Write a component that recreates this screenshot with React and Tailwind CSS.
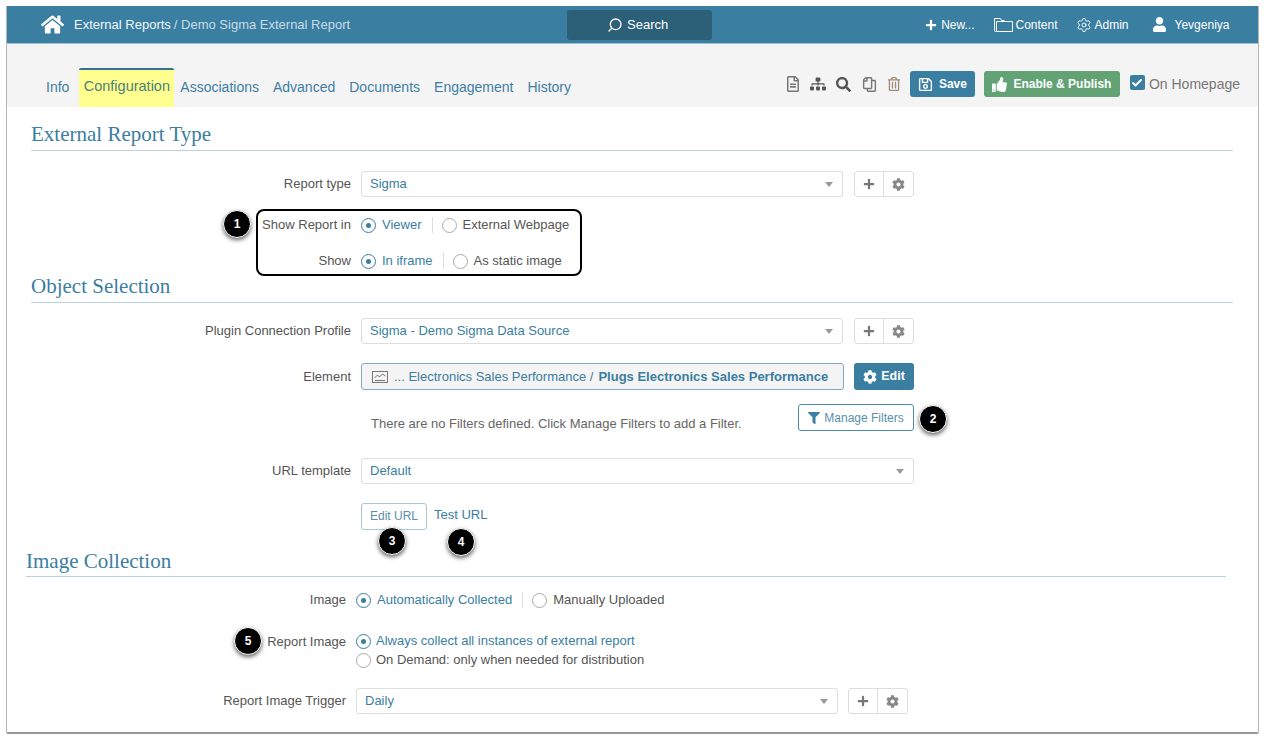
import React from 'react';
import { Search, Settings, Check } from 'lucide-react';
import { FaHome, FaPlus, FaCog, FaFilter, FaUser, FaSitemap, FaSearch, FaThumbsUp, FaRegSave, FaRegFileAlt, FaRegCopy, FaRegTrashAlt } from 'react-icons/fa';

const Radio = ({ on, label, gap = 'gap-[6px]' }) => (
    <span className={`flex items-center ${gap} ${on ? 'text-[#3a7ea1]' : 'text-[#555]'}`}>
        <span className={`w-[15px] h-[15px] rounded-full border flex items-center justify-center bg-white ${on ? 'border-[#3a7ea1] border-[1.5px]' : 'border-[#aaa]'}`}>
            {on && <span className="w-[5px] h-[5px] rounded-full bg-[#3a7ea1]" />}
        </span>
        {label}
    </span>
);

const RadioPair = ({ a, b }) => (
    <div className="flex items-center">
        <Radio on label={a} />
        <span className="w-px h-[16px] bg-[#ddd] ml-[10px] mr-[9px]" />
        <Radio label={b} />
    </div>
);

const Label = ({ children, w = 'w-[354px]' }) => (
    <div className={`${w} shrink-0 text-right pr-[10px] text-[#555]`}>{children}</div>
);

const Select = ({ value, w }) => (
    <div className={`${w} h-[26px] border border-[#ddd] rounded-[3px] bg-white flex items-center justify-between pl-[8px] pr-[9px] text-[#3a7ea1]`}>
        {value}
        <span className="w-0 h-0 border-l-[4px] border-r-[4px] border-t-[5px] border-l-transparent border-r-transparent border-t-[#999]" />
    </div>
);

const AddGear = ({ className = 'ml-[11px]' }) => (
    <div className={`${className} h-[26px] w-[60px] border border-[#ddd] rounded-[3px] flex bg-white`}>
        <div className="w-[29px] flex items-center justify-center border-r border-[#ddd]">
            <FaPlus size={12} className="text-[#777]" />
        </div>
        <div className="flex-1 flex items-center justify-center">
            <FaCog size={13} className="text-[#888]" />
        </div>
    </div>
);

const Title = ({ children, className }) => (
    <div className={`border-b border-[#b9d2de] font-['Liberation_Serif',serif] text-[21px] leading-[24px] text-[#3a7ea1] ${className}`}>{children}</div>
);

// numbered callouts sit on top of the form
const Badge = ({ n, className }) => (
    <div className={`absolute w-[28px] h-[28px] rounded-full bg-black text-white text-[12px] font-bold flex items-center justify-center border border-white shadow-[0_2px_4px_rgba(0,0,0,0.6)] ${className}`}>{n}</div>
);

const FolderIcon = () => (
    <svg width="19" height="16" viewBox="0 0 19 16" fill="none" stroke="#fff" strokeWidth="1" className="ml-[20px]">
        <path d="M2.5 14.5h-1a1 1 0 0 1-1-1V1.5h6l1 2h3" />
        <path d="M2.5 14.5V4.5h16v10z" />
    </svg>
);

const ChartIcon = () => (
    <svg width="16" height="12" viewBox="0 0 16 12" fill="none" stroke="#777" strokeWidth="1">
        <rect x="0.5" y="0.5" width="15" height="11" />
        <path d="M2.5 7l3-3 2 2 3-3 3 2M3 9.5h10" />
    </svg>
);

const tabs = ['Associations', 'Advanced', 'Documents', 'Engagement', 'History'];

const App = () => {
    return (
        <div className="relative w-[1264px] h-[736px] bg-white pl-[6px] pr-[5px] pt-[6px] font-['Liberation_Sans',sans-serif] overflow-hidden">
            <div className="relative h-[728px] border border-t-0 border-[#b5b5b5] border-b-[2px] border-b-[#999] rounded-b-[2px] overflow-hidden">
                {/* top bar */}
                <div className="h-[38px] bg-[#3a7ea1] border-b border-[#9fc4d6] flex items-center text-white text-[13px]">
                    <FaHome size={23} className="ml-[34px]" />
                    <span className="ml-[10px] text-[#f0f6f9]">External Reports</span>
                    <span className="ml-[3px] text-[#c9dde7]">/ Demo Sigma External Report</span>
                    <div className="ml-[217px] w-[145px] h-[30px] bg-[#2c6079] rounded-[3px] flex items-center justify-center gap-[4px] pr-[4px] text-[13px]">
                        <Search size={16} strokeWidth={2} className="-scale-x-100" />
                        Search
                    </div>
                    <div className="ml-[213px] flex items-center text-[12px]">
                        <FaPlus size={12} />
                        <span className="ml-[4px]">New...</span>
                        <FolderIcon />
                        <span className="ml-[2px]">Content</span>
                        <Settings size={16} strokeWidth={1.4} className="ml-[18px]" />
                        <span className="ml-[3px]">Admin</span>
                        <FaUser size={15} className="ml-[23px]" />
                        <span className="ml-[8px]">Yevgeniya</span>
                    </div>
                </div>

                {/* tabs and actions */}
                <div className="h-[63px] bg-[#f4f4f4] flex items-end text-[14px] text-[#3f7ea3]">
                    <div className="flex items-end ml-[39px] h-[39px]">
                        <span className="h-[38px] leading-[36px]">Info</span>
                        <div className="ml-[10px] h-[39px] w-[95px] bg-[#ffff8f] border-t-[2px] border-[#2f7391] rounded-t-[2px] text-center text-[14.5px] leading-[32px] text-[#4d8177]">Configuration</div>
                        <div className="ml-[6px] flex gap-[14px]">
                            {tabs.map((tab) => (
                                <span key={tab} className="h-[38px] leading-[36px]">{tab}</span>
                            ))}
                        </div>
                    </div>
                    <div className="ml-auto mb-[10px] h-[26px] flex items-center">
                        <FaRegFileAlt size={16} className="text-[#777]" />
                        <FaSitemap size={16} className="ml-[9px] text-[#555]" />
                        <FaSearch size={15} className="ml-[10px] text-[#555]" />
                        <FaRegCopy size={15} className="ml-[11px] text-[#777] -scale-x-100" />
                        <FaRegTrashAlt size={14} className="ml-[10px] text-[#a08a7a]" />
                        <div className="ml-[9px] h-[26px] w-[65px] bg-[#3a7ea1] rounded-[3px] text-white text-[12px] font-bold flex items-center justify-center gap-[6px]">
                            <FaRegSave size={15} />
                            Save
                        </div>
                        <div className="ml-[9px] h-[26px] w-[136px] bg-[#62a274] rounded-[3px] text-white text-[12px] font-bold flex items-center justify-center gap-[6px]">
                            <FaThumbsUp size={15} />
                            Enable &amp; Publish
                        </div>
                        <div className="ml-[10px] w-[15px] h-[15px] rounded-[2px] bg-[#3a7ea1] flex items-center justify-center mb-[3px]">
                            <Check size={12} strokeWidth={4} className="text-white" />
                        </div>
                        <span className="ml-[4px] mr-[18px] text-[14px] text-[#777]">On Homepage</span>
                    </div>
                </div>

                {/* form */}
                <div className="text-[13px]">
                    <div className="pl-[24px] pr-[25px]">
                        <Title className="mt-[15px] h-[29px]">External Report Type</Title>
                    </div>
                    <div className="flex items-center mt-[20px]">
                        <Label>Report type</Label>
                        <Select value="Sigma" w="w-[482px]" />
                        <AddGear />
                    </div>
                    <div className="flex items-center mt-[18px] h-[20px]">
                        <Label>Show Report in</Label>
                        <RadioPair a="Viewer" b="External Webpage" />
                    </div>
                    <div className="flex items-center mt-[16px] h-[20px]">
                        <Label>Show</Label>
                        <RadioPair a="In iframe" b="As static image" />
                    </div>
                    <div className="pl-[24px] pr-[25px]">
                        <Title className="mt-[3px] h-[29px]">Object Selection</Title>
                    </div>
                    <div className="flex items-center mt-[15px]">
                        <Label>Plugin Connection Profile</Label>
                        <Select value="Sigma - Demo Sigma Data Source" w="w-[482px]" />
                        <AddGear />
                    </div>
                    <div className="flex items-center mt-[19px]">
                        <Label>Element</Label>
                        <div className="w-[483px] h-[27px] border border-[#7fabc1] rounded-[3px] bg-[#f4f4f4] flex items-center pl-[10px] text-[#3a7ea1]">
                            <ChartIcon />
                            <span className="ml-[6px]">... Electronics Sales Performance /</span>
                            <span className="ml-[5px] font-bold">Plugs Electronics Sales Performance</span>
                        </div>
                        <div className="ml-[10px] w-[60px] h-[27px] bg-[#3a7ea1] rounded-[3px] text-white text-[12.5px] font-bold flex items-center justify-center gap-[4px]">
                            <FaCog size={14} />
                            Edit
                        </div>
                    </div>
                    <div className="flex items-start mt-[14px] h-[27px] pl-[364px]">
                        <span className="mt-[10px] text-[#666] w-[427px] whitespace-nowrap">There are no Filters defined. Click Manage Filters to add a Filter.</span>
                        <div className="w-[116px] h-[27px] shrink-0 border border-[#4c8bab] rounded-[3px] bg-white flex items-center justify-center gap-[4px] text-[#5a8fab] text-[12px]">
                            <FaFilter size={12} className="text-[#3a7ea1]" />
                            Manage Filters
                        </div>
                    </div>
                    <div className="flex items-center mt-[27px]">
                        <Label>URL template</Label>
                        <Select value="Default" w="w-[553px]" />
                    </div>
                    <div className="flex mt-[19px] pl-[354px]">
                        <div className="w-[66px] h-[27px] pb-[1px] border border-[#a9c8d7] rounded-[3px] bg-white flex items-center justify-center text-[12px] text-[#5a8fab]">Edit URL</div>
                        <span className="ml-[7px] mt-[2px] text-[#3a7ea1]">Test URL</span>
                    </div>
                    <div className="pl-[19px] pr-[32px]">
                        <Title className="mt-[19px] h-[28px]">Image Collection</Title>
                    </div>
                    <div className="flex items-center mt-[13px] h-[20px]">
                        <Label w="w-[349px]">Image</Label>
                        <RadioPair a="Automatically Collected" b="Manually Uploaded" />
                    </div>
                    <div className="flex mt-[22px]">
                        <Label w="w-[349px]">Report Image</Label>
                        <div className="flex flex-col gap-[3px] pt-[1px]">
                            <div className="h-[16px] flex items-center"><Radio on gap="gap-[5px]" label="Always collect all instances of external report" /></div>
                            <div className="h-[16px] flex items-center"><Radio gap="gap-[5px]" label="On Demand: only when needed for distribution" /></div>
                        </div>
                    </div>
                    <div className="flex items-center mt-[20px]">
                        <Label w="w-[349px]">Report Image Trigger</Label>
                        <Select value="Daily" w="w-[482px]" />
                        <AddGear className="ml-[10px]" />
                    </div>
                </div>
            </div>

            {/* annotation box + callouts */}
            <div className="absolute left-[256px] top-[209px] w-[326px] h-[67px] border-2 border-black rounded-[8px]" />
            <Badge n="1" className="left-[223px] top-[210px]" />
            <Badge n="2" className="left-[919px] top-[405px]" />
            <Badge n="3" className="left-[378px] top-[527px]" />
            <Badge n="4" className="left-[447px] top-[528px]" />
            <Badge n="5" className="left-[234px] top-[627px]" />
        </div>
    );
};

export default App;
